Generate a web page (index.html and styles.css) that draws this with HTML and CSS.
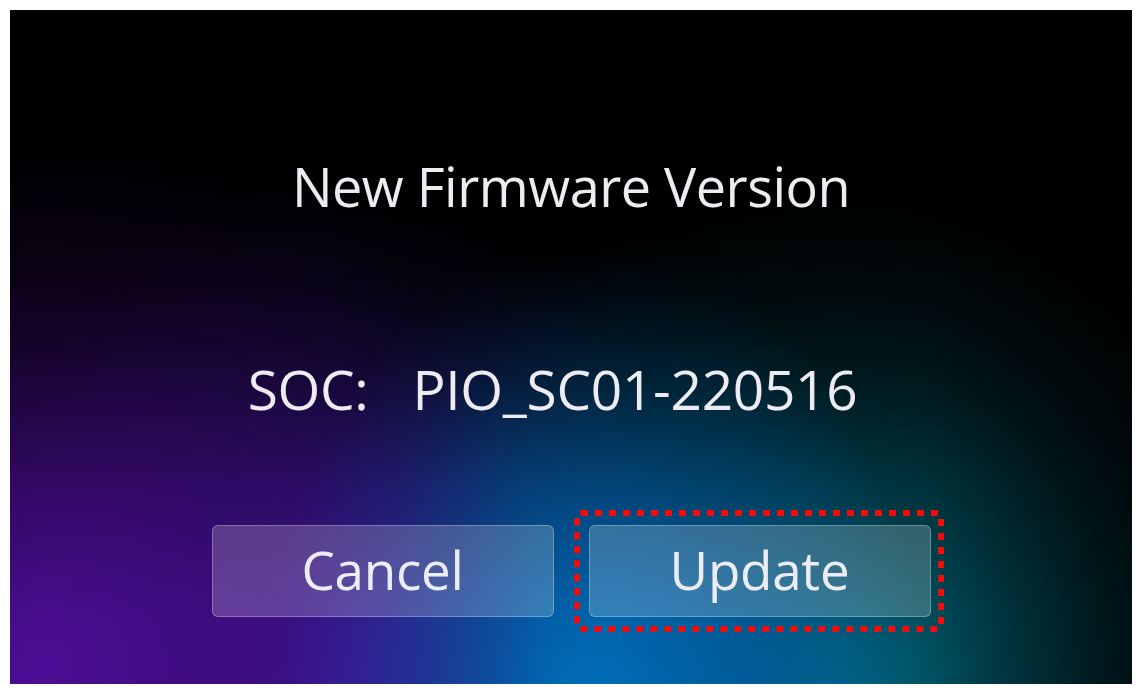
FILE: index.html
```html
<!DOCTYPE html>
<html>
<head>
<meta charset="utf-8">
<link rel="stylesheet" href="styles.css">
</head>
<body>
<div class="screen">
  <div class="title">New Firmware Version</div>
  <div class="soc"><span class="soc-label">SOC:</span><span class="soc-value">PIO_SC01-220516</span></div>
  <div class="actions">
    <div class="btn-wrap"><button class="btn">Cancel</button></div>
    <div class="btn-wrap">
      <button class="btn">Update</button>
      <svg class="focus-ring" width="370" height="122" viewBox="0 0 370 122">
        <rect x="3" y="3" width="364" height="116" rx="4" fill="none" stroke="#f20d0d" stroke-width="6" stroke-dasharray="7 7"/>
      </svg>
    </div>
  </div>
</div>
</body>
</html>
```

FILE: styles.css
```css
html, body {
  background: #ffffff;
}
body {
  margin: 10px 9px 8px 10px;
}
.screen {
  width: 1122px;
  height: 674px;
  box-sizing: border-box;
  padding-top: 146px;
  display: flex;
  flex-direction: column;
  align-items: center;
  font-family: "Open Sans", "Noto Sans", sans-serif;
  color: #ececf2;
  background-color: #000;
  background-image:
    linear-gradient(to bottom, rgba(0,0,0,1) 0%, rgba(0,0,0,0.72) 30%, rgba(0,0,0,0.15) 70%, rgba(0,0,0,0) 90%),
    linear-gradient(to left, rgba(0,0,0,0.55) 0%, rgba(0,0,0,0) 18%),
    radial-gradient(ellipse 45% 85% at 3% 98%, rgba(76,14,150,1) 0%, rgba(62,10,124,0.8) 45%, rgba(40,6,80,0) 100%),
    radial-gradient(ellipse 30% 72% at 52% 106%, rgba(0,112,190,1) 0%, rgba(0,96,172,0.75) 45%, rgba(0,60,140,0) 100%),
    radial-gradient(ellipse 42% 80% at 74% 104%, rgba(0,100,120,1) 0%, rgba(0,78,92,0.75) 45%, rgba(0,40,50,0) 100%),
    radial-gradient(ellipse 34% 78% at 30% 102%, rgba(62,36,190,1) 0%, rgba(46,26,150,0.6) 50%, rgba(40,20,130,0) 100%);
}
.title {
  font-size: 54px;
  line-height: 60px;
  letter-spacing: -0.5px;
}
.soc {
  margin-top: 143px;
  font-size: 55px;
  line-height: 60px;
  padding-right: 37px;
  letter-spacing: -0.3px;
}
.soc-label {
  margin-right: 44px;
}
.actions {
  margin-top: 106px;
  display: flex;
  gap: 35px;
}
.btn-wrap {
  position: relative;
}
.btn {
  width: 342px;
  height: 92px;
  box-sizing: border-box;
  border: 1px solid rgba(255,255,255,0.28);
  border-radius: 6px;
  background: rgba(255,255,255,0.2);
  color: #ececf4;
  font-family: "Open Sans", "Noto Sans", sans-serif;
  font-size: 53px;
  line-height: 88px;
  padding: 0 0 4px;
  letter-spacing: -0.3px;
}
.focus-ring {
  position: absolute;
  left: -15px;
  top: -15px;
  display: block;
}
```
